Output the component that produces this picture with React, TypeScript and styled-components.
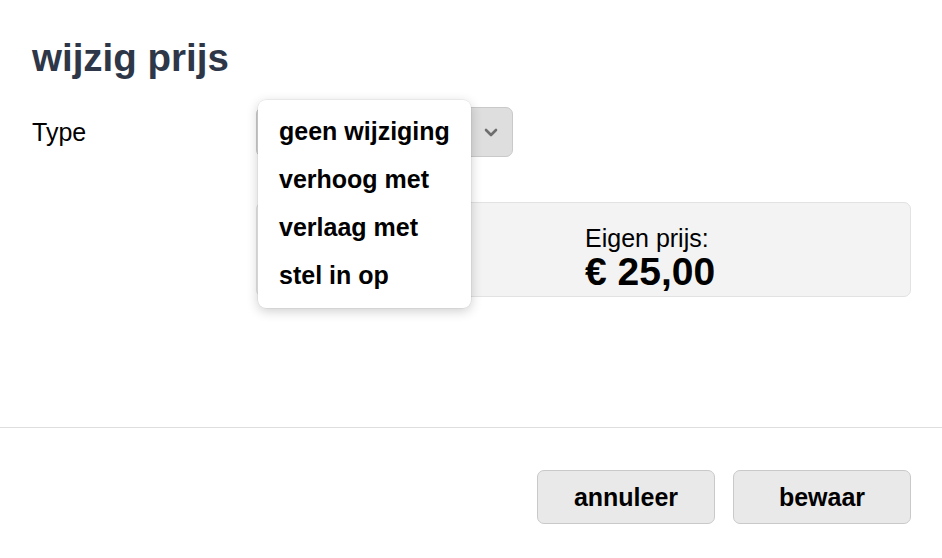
import React from "react";
import styled, { createGlobalStyle } from "styled-components";

const GlobalStyle = createGlobalStyle`
  html, body {
    margin: 0;
    padding: 0;
    background: #fff;
    font-family: "Liberation Sans", Arial, Helvetica, sans-serif;
    color: #000;
  }
`;

const Main = styled.div`
  box-sizing: border-box;
  height: 427px;
  padding: 35px 31px 0 32px;
`;

const Title = styled.h1`
  margin: 0;
  font-size: 38.5px;
  line-height: 46px;
  font-weight: 700;
  color: #2d3748;
`;

const FormRow = styled.div<{ $top: number; $height: number }>`
  display: grid;
  grid-template-columns: 224px 1fr;
  align-items: center;
  margin-top: ${(p) => p.$top}px;
  height: ${(p) => p.$height}px;
`;

const Label = styled.div`
  font-size: 25px;
  line-height: 30px;
`;

const SelectWrap = styled.div`
  position: relative;
  width: 257px;
`;

const SelectBox = styled.div`
  box-sizing: border-box;
  height: 50px;
  display: flex;
  align-items: center;
  justify-content: flex-end;
  padding: 0 14px 0 20px;
  background: #dedede;
  border: 1.5px solid #c9c9c9;
  border-radius: 7px;
`;

const Menu = styled.ul`
  position: absolute;
  top: -7px;
  left: 2px;
  width: 213px;
  margin: 0;
  padding: 7px 0 9px;
  list-style: none;
  background: #fff;
  border-radius: 8px;
  box-shadow: 0 0 0 0.5px rgba(0, 0, 0, 0.08), 0 3px 12px rgba(0, 0, 0, 0.2);
  z-index: 2;
`;

const MenuItem = styled.li`
  height: 48px;
  display: flex;
  align-items: center;
  padding-left: 21px;
  font-size: 25px;
  font-weight: 700;
  white-space: nowrap;
`;

const Panel = styled.div`
  box-sizing: border-box;
  height: 95px;
  display: grid;
  grid-template-columns: 328px 1fr;
  padding-top: 21px;
  background: #f3f3f3;
  border: 1.5px solid #e2e2e2;
  border-radius: 7px;
`;

const PriceLabel = styled.div`
  font-size: 25px;
  line-height: 28px;
`;

const PriceValue = styled.div`
  font-size: 39px;
  line-height: 40px;
  font-weight: 700;
`;

const Footer = styled.div`
  display: flex;
  justify-content: flex-end;
  gap: 18px;
  padding: 42px 31px 0 0;
  border-top: 1.5px solid #dedede;
`;

const Button = styled.button`
  box-sizing: border-box;
  width: 178px;
  height: 54px;
  background: #e9e9e9;
  border: 1.5px solid #c9c9c9;
  border-radius: 7px;
  font-family: "Liberation Sans", Arial, Helvetica, sans-serif;
  font-size: 25px;
  font-weight: 700;
  color: #000;
`;

const Chevron = () => (
  <svg width="14" height="9" viewBox="0 0 14 9">
    <polyline
      points="2,2 7,7 12,2"
      fill="none"
      stroke="#6e6e6e"
      strokeWidth="2.6"
      strokeLinecap="round"
      strokeLinejoin="round"
    />
  </svg>
);

const options = ["geen wijziging", "verhoog met", "verlaag met", "stel in op"];

export default function App() {
  return (
    <>
      <GlobalStyle />
      <Main>
        <Title>wijzig prijs</Title>
        <FormRow $top={26} $height={50}>
          <Label>Type</Label>
          <SelectWrap>
            <SelectBox>
              <Chevron />
            </SelectBox>
            <Menu>
              {options.map((o) => (
                <MenuItem key={o}>{o}</MenuItem>
              ))}
            </Menu>
          </SelectWrap>
        </FormRow>
        <FormRow $top={45} $height={95}>
          <div />
          <Panel>
            <div />
            <div>
              <PriceLabel>Eigen prijs:</PriceLabel>
              <PriceValue>€ 25,00</PriceValue>
            </div>
          </Panel>
        </FormRow>
      </Main>
      <Footer>
        <Button>annuleer</Button>
        <Button>bewaar</Button>
      </Footer>
    </>
  );
}
